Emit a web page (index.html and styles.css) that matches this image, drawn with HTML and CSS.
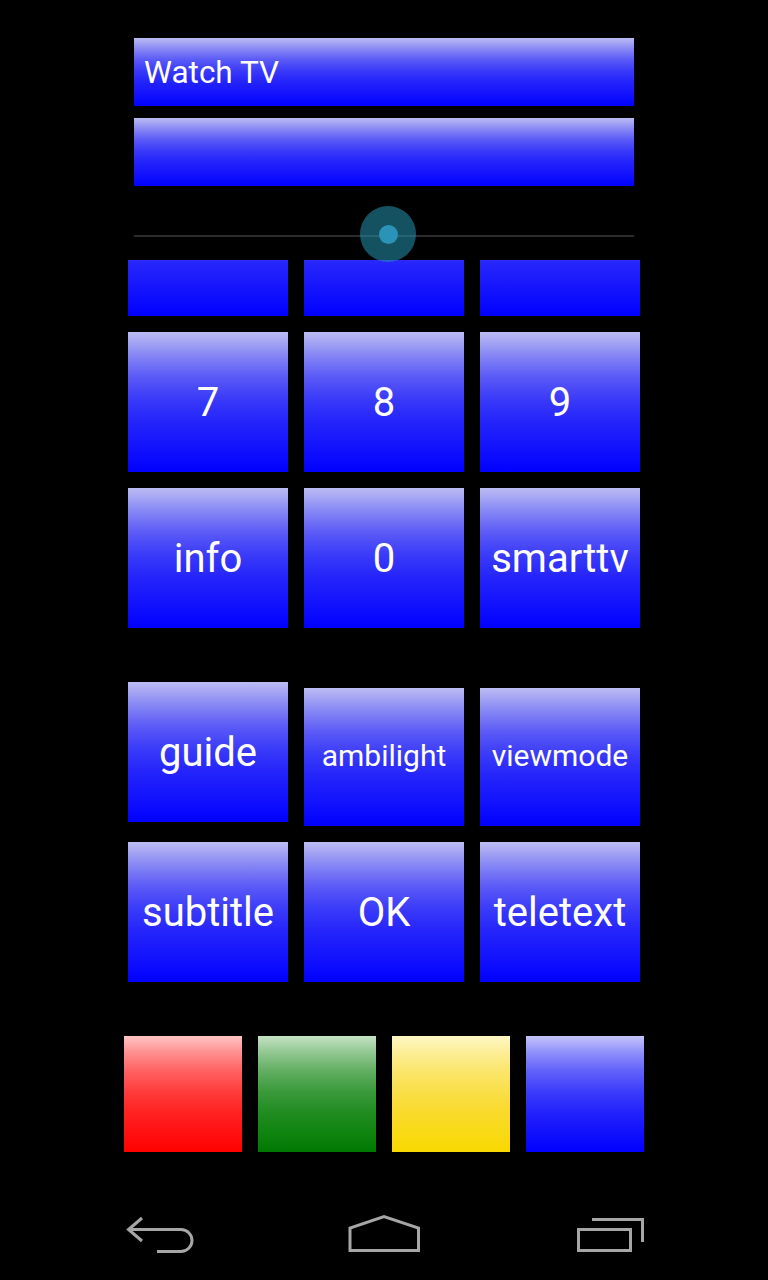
FILE: index.html
```html
<!DOCTYPE html>
<html>
<head>
<meta charset="utf-8">
<link rel="stylesheet" href="styles.css">
</head>
<body>
<div class="screen">
  <div class="bar"><span class="bar-label">Watch TV</span></div>
  <div class="bar bar-second"></div>
  <div class="slider">
    <div class="track"></div>
    <div class="thumb"><div class="thumb-core"></div></div>
  </div>
  <div class="grid row-cut">
    <div class="key key-cut"></div>
    <div class="key key-cut"></div>
    <div class="key key-cut"></div>
  </div>
  <div class="grid row-a">
    <div class="key">7</div>
    <div class="key">8</div>
    <div class="key">9</div>
  </div>
  <div class="grid row-b">
    <div class="key">info</div>
    <div class="key">0</div>
    <div class="key">smarttv</div>
  </div>
  <div class="grid row-c">
    <div class="key">guide</div>
    <div class="key key-small">ambilight</div>
    <div class="key key-small">viewmode</div>
  </div>
  <div class="grid row-d">
    <div class="key">subtitle</div>
    <div class="key">OK</div>
    <div class="key">teletext</div>
  </div>
  <div class="colors">
    <div class="swatch swatch-red"></div>
    <div class="swatch swatch-green"></div>
    <div class="swatch swatch-yellow"></div>
    <div class="swatch swatch-blue"></div>
  </div>
  <div class="nav">
    <div class="nav-cell">
      <svg width="80" height="64" viewBox="0 0 80 64"><path d="M22 18 L8.5 29.5 L22 41" /><path d="M8.5 29.5 H61 A11 11 0 0 1 61 51.5 H37" /></svg>
    </div>
    <div class="nav-cell">
      <svg width="80" height="64" viewBox="0 0 80 64"><path d="M6 50.5 V28 L40 16.5 L74.5 28 V50.5 Z" /></svg>
    </div>
    <div class="nav-cell">
      <svg width="80" height="64" viewBox="0 0 80 64"><path d="M10.5 29.5 H62.5 V50.5 H10.5 Z" /><path d="M24 19.5 H74.5 V42" /></svg>
    </div>
  </div>
</div>
</body>
</html>
```
FILE: styles.css
```css
html, body {
  margin: 0;
  padding: 0;
  background: #000;
}
body {
  width: 768px;
  height: 1280px;
  overflow: hidden;
  font-family: Roboto, "Noto Sans", "Liberation Sans", sans-serif;
  color: #fff;
}
.screen {
  display: flex;
  flex-direction: column;
  align-items: center;
  padding-top: 38px;
}
.bar {
  width: 500px;
  height: 68px;
  box-sizing: border-box;
  padding-left: 10px;
  display: flex;
  align-items: center;
  background: linear-gradient(to bottom, #bcbcf3 0%, #8888f5 16%, #5a5af7 32%, #3a3af9 48%, #2424fb 64%, #1313fd 82%, #0000ff 100%);
}
.bar-label {
  font-size: 31.5px;
  line-height: 1;
  padding-top: 2px;
}
.bar-second {
  margin-top: 12px;
}
.slider {
  position: relative;
  width: 500px;
  height: 74px;
}
.track {
  position: absolute;
  left: 0;
  right: 0;
  top: 49px;
  height: 2px;
  background: #2c2c2c;
}
.thumb {
  position: absolute;
  left: 226px;
  top: 20px;
  width: 56px;
  height: 56px;
  border-radius: 50%;
  background: rgba(36, 150, 176, 0.55);
  display: flex;
  align-items: center;
  justify-content: center;
  z-index: 2;
}
.thumb-core {
  width: 19px;
  height: 19px;
  border-radius: 50%;
  background: #2b92b8;
}
.grid {
  display: grid;
  grid-template-columns: 160px 160px 160px;
  column-gap: 16px;
  align-items: start;
}
.key {
  height: 140px;
  display: flex;
  align-items: center;
  justify-content: center;
  font-size: 40px;
  white-space: nowrap;
  background: linear-gradient(to bottom, #bcbcf3 0%, #8888f5 16%, #5a5af7 32%, #3a3af9 48%, #2424fb 64%, #1313fd 82%, #0000ff 100%);
}
.key-cut {
  height: 56px;
  background-size: 100% 140px;
  background-position: bottom;
}
.key-small {
  font-size: 30px;
  height: 138px;
  margin-top: 6px;
  box-sizing: border-box;
  padding-bottom: 4px;
}
.row-a { margin-top: 16px; }
.row-b { margin-top: 16px; }
.row-c { margin-top: 54px; }
.row-d { margin-top: 16px; }
.colors {
  display: flex;
  gap: 16px;
  margin-top: 54px;
}
.swatch {
  width: 118px;
  height: 116px;
}
.swatch-red {
  background: linear-gradient(to bottom, #ffc4c4 0%, #ff9090 14%, #ff6262 30%, #ff3c3c 48%, #ff2222 66%, #ff1010 84%, #ff0000 100%);
}
.swatch-green {
  background: linear-gradient(to bottom, #c4e2c4 0%, #92c892 14%, #62ae62 30%, #3a9a3a 48%, #218c21 66%, #0f840f 84%, #007800 100%);
}
.swatch-yellow {
  background: linear-gradient(to bottom, #fdf7c4 0%, #fcee98 14%, #fbe66c 30%, #f9df48 48%, #f9da2c 66%, #f9da14 84%, #f9d800 100%);
}
.swatch-blue {
  background: linear-gradient(to bottom, #c4c4fb 0%, #9090fb 14%, #6262fb 30%, #3c3cfb 48%, #2222fc 66%, #1010fd 84%, #0000ff 100%);
}
.nav {
  align-self: stretch;
  display: flex;
  gap: 144px;
  padding-left: 120px;
  margin-top: 48px;
}
.nav-cell {
  width: 80px;
  height: 64px;
}
.nav-cell svg {
  display: block;
  fill: none;
  stroke: #a6a6a6;
  stroke-width: 3px;
}
```
